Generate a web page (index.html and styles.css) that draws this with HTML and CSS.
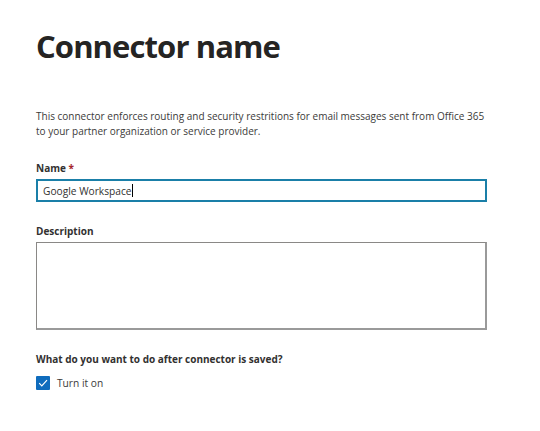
FILE: index.html
```html
<!DOCTYPE html>
<html>
<head>
<meta charset="utf-8">
<link rel="stylesheet" href="styles.css">
</head>
<body>
<main class="panel">
  <h1 class="title">Connector name</h1>
  <p class="intro">This connector enforces routing and security restritions for email messages sent from Office 365 to your partner organization or service provider.</p>
  <div class="field field-name">
    <label class="label">Name <span class="req">*</span></label>
    <div class="input focused"><span class="value">Google Workspace</span><span class="caret"></span></div>
  </div>
  <div class="field field-desc">
    <label class="label">Description</label>
    <div class="textarea"></div>
  </div>
  <div class="field field-after">
    <div class="label">What do you want to do after connector is saved?</div>
    <div class="check-row">
      <span class="checkbox"><svg viewBox="0 0 14 14" width="14" height="14"><path d="M3.2 7.2 L5.8 9.8 L11 4.2" fill="none" stroke="#fff" stroke-width="1.2"/></svg></span>
      <span class="check-label">Turn it on</span>
    </div>
  </div>
</main>
</body>
</html>
```

FILE: styles.css
```css
html, body {
  margin: 0;
  padding: 0;
  background: #fff;
}
body {
  font-family: "Open Sans", "Noto Sans", sans-serif;
  color: #323130;
}
.panel {
  padding: 24px 53px 0 36px;
  width: 451px;
}
.title {
  margin: 0;
  font-size: 31px;
  font-weight: 700;
  line-height: 44px;
  color: #252423;
  letter-spacing: -0.9px;
}
.intro {
  margin: 41px 0 0;
  font-size: 10px;
  line-height: 15px;
  color: #3b3a39;
}
.field-name {
  margin-top: 22px;
}
.label {
  display: block;
  font-size: 10px;
  font-weight: 700;
  line-height: 14px;
  color: #323130;
  margin-bottom: 4px;
}
.req {
  color: #a4262c;
}
.input {
  box-sizing: border-box;
  height: 23px;
  border: 2px solid #1a7fa8;
  display: flex;
  align-items: center;
  padding-left: 5px;
  font-size: 10.2px;
  color: #323130;
}
.caret {
  display: inline-block;
  width: 1px;
  height: 13px;
  background: #000;
}
.field-desc {
  margin-top: 22px;
}
.textarea {
  box-sizing: border-box;
  height: 88px;
  border: 1px solid #8a8886;
  border-right-width: 2px;
  border-bottom-width: 2px;
  border-right-color: #9a9a9a;
  border-bottom-color: #9a9a9a;
}
.field-after {
  margin-top: 22px;
}
.field-after .label {
  margin-bottom: 10px;
}
.check-row {
  display: flex;
  align-items: center;
  gap: 7px;
}
.checkbox {
  width: 14px;
  height: 14px;
  background: #0f6cbd;
  border-radius: 1px;
  display: flex;
}
.check-label {
  font-size: 10.2px;
  color: #3b3a39;
  line-height: 14px;
}
```
